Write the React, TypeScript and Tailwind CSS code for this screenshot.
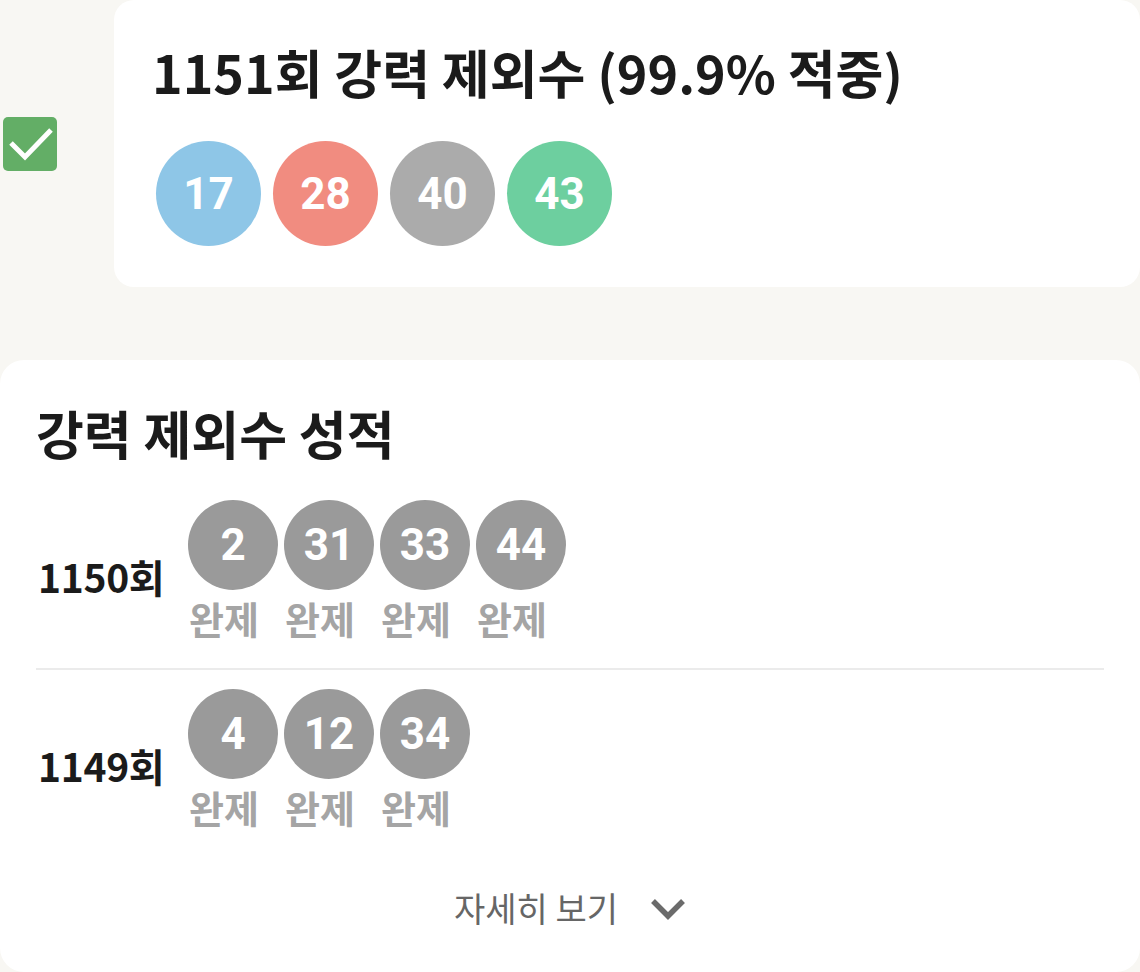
import React from "react";

const kr = { fontFamily: '"Noto Sans CJK KR", "Noto Sans", sans-serif' };
const num = { fontFamily: 'Roboto, "Noto Sans", sans-serif' };

const topBalls = [
  { n: 17, c: "bg-[#8ec6e7]" },
  { n: 28, c: "bg-[#f18c80]" },
  { n: 40, c: "bg-[#ababab]" },
  { n: 43, c: "bg-[#6dcf9f]" },
];

const rows = [
  { round: "1150회", nums: [2, 31, 33, 44] },
  { round: "1149회", nums: [4, 12, 34] },
];

const Ball = ({ n }: { n: number }) => (
  <div className="flex flex-col items-start w-[90px]">
    <div
      className="w-[90px] h-[90px] rounded-full bg-[#9a9a9a] flex items-center justify-center text-white text-[44px] font-bold"
      style={num}
    >
      {n}
    </div>
    <div className="text-[38px] leading-[46px] mt-[5px] ml-[1px] font-bold text-[#a5a5a5]">완제</div>
  </div>
);

export default function App() {
  return (
    <div className="w-[1140px] h-[972px] overflow-hidden bg-[#f8f7f3]" style={kr}>
      <div className="flex items-center h-[287px]">
        <div className="ml-[3px] w-[54px] h-[54px] rounded-[5px] bg-[#63ae66] flex items-center justify-center">
          <svg width="54" height="54" viewBox="0 0 54 54">
            <polyline points="8,26 22,40 48,13" fill="none" stroke="white" strokeWidth="5" />
          </svg>
        </div>
        <div className="ml-[57px] flex-1 h-full bg-white rounded-[20px] pl-[38px] pt-[41px]">
          <h1 className="text-[52px] leading-[62px] font-bold text-[#1b1b1b]">
            1151회 강력 제외수 (99.9% 적중)
          </h1>
          <div className="flex gap-[12px] mt-[38px] ml-[4px]">
            {topBalls.map((b) => (
              <div
                key={b.n}
                className={`w-[105px] h-[105px] rounded-full ${b.c} flex items-center justify-center text-white text-[44px] font-bold`}
                style={num}
              >
                {b.n}
              </div>
            ))}
          </div>
        </div>
      </div>

      <div className="mt-[73px] h-[612px] bg-white rounded-[24px] px-[36px] pt-[44px]">
        <h2 className="text-[52px] leading-[58px] font-bold text-[#1b1b1b]">강력 제외수 성적</h2>
        <div className="mt-[38px]">
          {rows.map((r, i) => (
            <div key={r.round}>
              {i > 0 && <div className="h-[2px] bg-[#ebebeb] mt-[27px] mb-[19px]" />}
              <div className="flex items-center">
                <div className="w-[152px] pl-[2px] pt-[12px] text-[39px] font-bold text-[#1b1b1b] tracking-[-0.3px]">
                  {r.round}
                </div>
                <div className="flex gap-[6px]">
                  {r.nums.map((n) => (
                    <Ball key={n} n={n} />
                  ))}
                </div>
              </div>
            </div>
          ))}
        </div>
        <div className="flex items-center justify-center gap-[32px] mt-[52px]">
          <span className="text-[34px] text-[#666666]">자세히 보기</span>
          <svg width="36" height="22" viewBox="0 0 36 22" className="mt-[2px]">
            <polyline points="3,3 18,18 33,3" fill="none" stroke="#6b6b6b" strokeWidth="5.5" />
          </svg>
        </div>
      </div>
    </div>
  );
}
